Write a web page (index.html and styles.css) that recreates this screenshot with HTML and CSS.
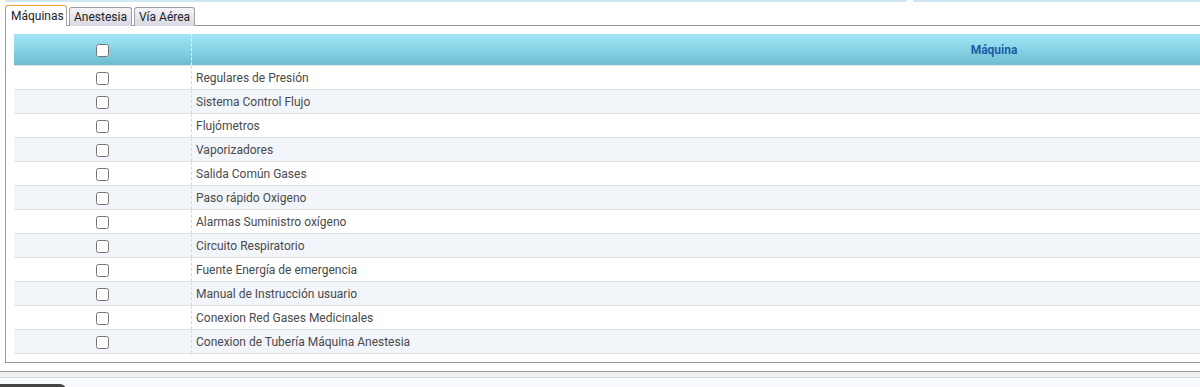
FILE: index.html
```html
<!DOCTYPE html>
<html lang="es">
<head>
    <meta charset="UTF-8">
    <meta name="viewport" content="width=device-width, initial-scale=1.0">
    <link rel="stylesheet" href="styles.css">
    <title>Máquinas</title>
</head>
<body>
    <div class="Page">
        <div class="TopBar">
            <div class="TopLine TopLeft"></div>
            <div class="TopLine TopRight"></div>
        </div>
        <div class="Tabs">
            <div class="Tab Active">Máquinas</div>
            <div class="Tab">Anestesia</div>
            <div class="Tab">Vía Aérea</div>
        </div>
        <div class="Panel">
            <table class="Grid">
                <thead>
                    <tr>
                        <th class="ChkCol"><input type="checkbox"></th>
                        <th class="NameCol">Máquina</th>
                    </tr>
                </thead>
                <tbody>
                    <tr><td class="ChkCol"><input type="checkbox"></td><td class="NameCol">Regulares de Presión</td></tr>
                    <tr><td class="ChkCol"><input type="checkbox"></td><td class="NameCol">Sistema Control Flujo</td></tr>
                    <tr><td class="ChkCol"><input type="checkbox"></td><td class="NameCol">Flujómetros</td></tr>
                    <tr><td class="ChkCol"><input type="checkbox"></td><td class="NameCol">Vaporizadores</td></tr>
                    <tr><td class="ChkCol"><input type="checkbox"></td><td class="NameCol">Salida Común Gases</td></tr>
                    <tr><td class="ChkCol"><input type="checkbox"></td><td class="NameCol">Paso rápido Oxigeno</td></tr>
                    <tr><td class="ChkCol"><input type="checkbox"></td><td class="NameCol">Alarmas Suministro oxígeno</td></tr>
                    <tr><td class="ChkCol"><input type="checkbox"></td><td class="NameCol">Circuito Respiratorio</td></tr>
                    <tr><td class="ChkCol"><input type="checkbox"></td><td class="NameCol">Fuente Energía de emergencia</td></tr>
                    <tr><td class="ChkCol"><input type="checkbox"></td><td class="NameCol">Manual de Instrucción usuario</td></tr>
                    <tr><td class="ChkCol"><input type="checkbox"></td><td class="NameCol">Conexion Red Gases Medicinales</td></tr>
                    <tr><td class="ChkCol"><input type="checkbox"></td><td class="NameCol">Conexion de Tubería Máquina Anestesia</td></tr>
                </tbody>
            </table>
        </div>
        <div class="Footer">
            <div class="FooterLine"></div>
            <div class="FooterBar">
                <div class="FooterBtn"></div>
            </div>
        </div>
    </div>
</body>
</html>
```

FILE: styles.css
```css
html, body{
    margin: 0;
    overflow: hidden;
}
body{
    background-color: white;
    font-family: Roboto, 'Liberation Sans', Arial, sans-serif;
    font-size: 12px;
    color: #444;
}
.Page{
    width: 1200px;
    height: 387px;
    overflow: hidden;
}
.TopBar{
    display: flex;
    height: 2px;
    padding-left: 5px;
}
.TopLine{
    background-color: #cfe7f4;
    height: 2px;
}
.TopLeft{
    width: 902px;
}
.TopRight{
    flex: 1;
    margin-left: 6px;
}
.Tabs{
    display: flex;
    align-items: flex-end;
    gap: 2px;
    margin-left: 5px;
    margin-top: 3px;
    height: 21px;
    position: relative;
    z-index: 1;
}
.Tab{
    height: 18px;
    line-height: 18px;
    padding: 0 4px;
    border: 1px solid #a0a0a0;
    border-bottom: none;
    border-radius: 3px 3px 0 0;
    background: linear-gradient(#f4f4f8, #d8d8e4);
    color: #222;
    font-size: 12px;
}
.Tab.Active{
    height: 20px;
    line-height: 20px;
    background: white;
    border-color: #f0a030 #a0a0a0 white #a0a0a0;
    padding: 0 5px;
    width: 50px;
}
.Panel{
    border: 1px solid #999;
    margin-left: 5px;
    margin-top: -1px;
    width: 1800px;
    height: 338px;
    padding: 8px 8px 0 8px;
    box-sizing: border-box;
}
.Grid{
    border-collapse: collapse;
    width: 1778px;
}
.Grid th{
    height: 31px;
    padding: 0;
    background: linear-gradient(#a3e7f9, #6cbdd0);
    border-bottom: 1px solid #e4e8ec;
    color: #1b5da6;
    font-weight: bold;
    font-size: 12px;
}
.Grid td{
    height: 23px;
    padding: 0;
    border-bottom: 1px solid #dde1e6;
    font-size: 12px;
    color: #4a4a4a;
}
.Grid tbody tr:nth-child(even){
    background-color: #f2f5fa;
}
.ChkCol{
    width: 177px;
    text-align: center;
    border-right: 1px dashed #d8d8d8;
}
.Grid th.ChkCol{
    border-right: 1px dashed #e8f8fc;
}
.ChkCol input{
    margin: 0;
    width: 13px;
    height: 13px;
    vertical-align: middle;
}
.Grid .NameCol{
    text-align: left;
    padding-left: 4px;
}
.Grid th.NameCol{
    text-align: center;
}
.Footer{
    margin-top: 8px;
}
.FooterLine{
    border-top: 1px solid #999;
    height: 5px;
    background-color: #eef0f4;
}
.FooterBar{
    border-top: 1px solid #d4d8dd;
    height: 10px;
    background-color: #f8f9fc;
}
.FooterBtn{
    margin-top: 6px;
    width: 66px;
    height: 10px;
    background-color: #454545;
    border-radius: 0 6px 0 0;
}
```
